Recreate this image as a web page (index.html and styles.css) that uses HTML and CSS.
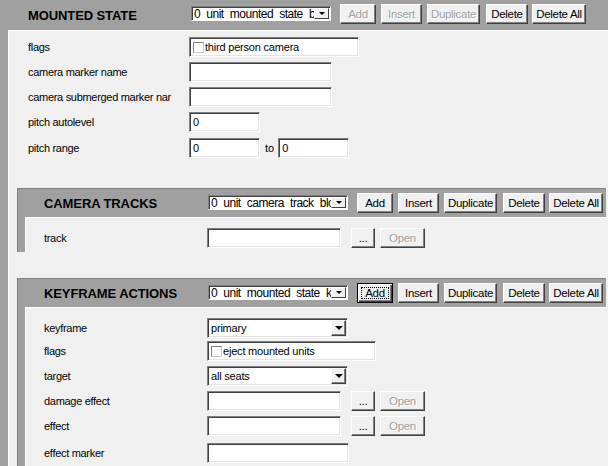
FILE: index.html
```html
<!DOCTYPE html>
<html>
<head>
<meta charset="utf-8">
<link rel="stylesheet" href="styles.css">
</head>
<body>
<div class="sec top">
  <div class="head">
    <div class="title">MOUNTED STATE</div>
    <div class="combo"><span class="combo-txt">0_unit_mounted_state_block</span><span class="combo-btn"><i class="tri-s"></i></span></div>
    <div class="btn dis b-add">Add</div>
    <div class="btn dis b-ins">Insert</div>
    <div class="btn dis b-dup">Duplicate</div>
    <div class="btn b-del">Delete</div>
    <div class="btn b-dall">Delete All</div>
  </div>
  <div class="body">
    <div class="row"><span class="lbl">flags</span><div class="inp w170"><span class="cb"></span>third person camera</div></div>
    <div class="row"><span class="lbl">camera marker name</span><div class="inp w143"></div></div>
    <div class="row"><span class="lbl">camera submerged marker nar</span><div class="inp w143"></div></div>
    <div class="row"><span class="lbl">pitch autolevel</span><div class="inp w71">0</div></div>
    <div class="row r6"><span class="lbl">pitch range</span><div class="inp w71">0</div><span class="to">to</span><div class="inp w71">0</div></div>

    <div class="sec nested cam">
      <div class="head">
        <div class="title">CAMERA TRACKS</div>
        <div class="combo"><span class="combo-txt">0_unit_camera_track_block</span><span class="combo-btn"><i class="tri-s"></i></span></div>
        <div class="btn b-add">Add</div>
        <div class="btn b-ins">Insert</div>
        <div class="btn b-dup">Duplicate</div>
        <div class="btn b-del">Delete</div>
        <div class="btn b-dall">Delete All</div>
      </div>
      <div class="body">
        <div class="row"><span class="lbl">track</span><div class="inp w134"></div><div class="btn b-dots">...</div><div class="btn dis b-open">Open</div></div>
      </div>
    </div>

    <div class="sec nested kf">
      <div class="head">
        <div class="title">KEYFRAME ACTIONS</div>
        <div class="combo"><span class="combo-txt">0_unit_mounted_state_keyframe_action_block</span><span class="combo-btn"><i class="tri-s"></i></span></div>
        <div class="btn def b-add"><span class="fr">Add</span></div>
        <div class="btn b-ins">Insert</div>
        <div class="btn b-dup">Duplicate</div>
        <div class="btn b-del">Delete</div>
        <div class="btn b-dall">Delete All</div>
      </div>
      <div class="body">
        <div class="row"><span class="lbl">keyframe</span><div class="inp sel w141"><span class="sel-txt">primary</span><span class="sel-btn"><i class="tri"></i></span></div></div>
        <div class="row r3"><span class="lbl">flags</span><div class="inp w169"><span class="cb"></span>eject mounted units</div></div>
        <div class="row"><span class="lbl">target</span><div class="inp sel w141"><span class="sel-txt">all seats</span><span class="sel-btn"><i class="tri"></i></span></div></div>
        <div class="row"><span class="lbl">damage effect</span><div class="inp w133"></div><div class="btn b-dots">...</div><div class="btn dis b-open">Open</div></div>
        <div class="row"><span class="lbl">effect</span><div class="inp w133"></div><div class="btn b-dots">...</div><div class="btn dis b-open">Open</div></div>
        <div class="row r7"><span class="lbl">effect marker</span><div class="inp w142"></div></div>
      </div>
    </div>
  </div>
</div>
</body>
</html>
```

FILE: styles.css
```css
* { box-sizing: border-box; }
html, body { margin: 0; padding: 0; height: 100%; overflow: hidden; }
body {
  background: #f0f0f0;
  font-family: "Liberation Sans", Arial, sans-serif;
  font-size: 11px;
  color: #000;
}

.sec { background: #a0a0a0; }
.top { width: 100%; min-height: 100vh; display: flex; flex-direction: column; }
.top > .body { flex: 1; padding-top: 6px; }

.head { display: flex; align-items: flex-start; height: 30px; padding-left: 28px; }
.nested > .head { height: 28px; padding-left: 26px; }

.title {
  width: 163px;
  flex: none;
  align-self: center;
  font-weight: bold;
  font-size: 13px;
  letter-spacing: -0.1px;
  white-space: nowrap;
}
.nested .title { width: 164px; }

.combo {
  margin-top: 6px;
  width: 140px;
  height: 15px;
  flex: none;
  display: flex;
  background: #fff;
  border: 1px solid;
  border-color: #808080 #fff #fff #808080;
  box-shadow: inset 1px 1px #404040;
  padding: 1px 1px 1px 2px;
}
.combo-txt {
  flex: 1;
  overflow: hidden;
  white-space: nowrap;
  font-size: 12px;
  line-height: 13px;
  height: 11px;
  letter-spacing: -0.5px;
  word-spacing: 1px;
}
.combo-btn {
  width: 15px;
  height: 11px;
  flex: none;
  background: #f0f0f0;
  border: 1px solid;
  border-color: #fff #404040 #404040 #fff;
  display: flex;
  align-items: center;
  justify-content: center;
}
.tri-s {
  display: block;
  width: 0; height: 0;
  border-left: 3px solid transparent;
  border-right: 3px solid transparent;
  border-top: 3px solid #000;
}
.tri {
  display: block;
  width: 0; height: 0;
  border-left: 4px solid transparent;
  border-right: 4px solid transparent;
  border-top: 4px solid #000;
}

.btn {
  flex: none;
  margin-top: 4px;
  height: 20px;
  background: #f0f0f0;
  border: 1px solid;
  border-color: #fff #404040 #404040 #fff;
  box-shadow: inset -1px -1px #808080;
  display: flex;
  align-items: center;
  justify-content: center;
  font-size: 11.5px;
  letter-spacing: -0.3px;
  white-space: nowrap;
}
.dis { color: #a0a0a0; text-shadow: 1px 1px #fff; }
.def {
  border-color: #000;
  box-shadow: inset 1px 1px #fff, inset -1px -1px #404040, inset -2px -2px #808080;
  align-items: stretch;
  padding: 3px 3px;
}
.fr {
  flex: 1;
  border: 1px dotted #000;
  display: flex;
  align-items: center;
  justify-content: center;
}

.b-add { width: 36px; margin-left: 9px; }
.b-ins { width: 41px; margin-left: 5px; }
.b-dup { width: 53px; margin-left: 5px; }
.b-del { width: 42px; margin-left: 6px; }
.b-dall { width: 54px; margin-left: 4px; }
.row .btn { margin-top: 0; }
.b-dots { width: 24px; margin-left: 10px; }
.b-open { width: 45px; margin-left: 5px; }

.body {
  margin-left: 8px;
  background: #f0f0f0;
  border-top: 1px solid #fff;
  border-left: 1px solid #fff;
}

.nested {
  margin-left: 8px;
  width: 589px;
  border-top: 1px solid #808080;
  border-left: 1px solid #808080;
}
.nested > .body { margin-left: 7px; padding-top: 10px; }
.cam { margin-top: 30px; }
.cam > .body { padding-bottom: 4px; }
.kf { margin-top: 26px; }
.kf > .body { padding-bottom: 20px; }

.row {
  display: flex;
  align-items: center;
  height: 20px;
  margin-top: 5px;
  padding-left: 19px;
}
.row:first-child { margin-top: 0; }
.r3 { margin-top: 3px; }
.row.r6 { margin-top: 6px; }
.row.r7 { margin-top: 7px; }
.nested .row { padding-left: 18px; }

.lbl {
  width: 161px;
  flex: none;
  letter-spacing: -0.3px;
  white-space: nowrap;
  overflow: hidden;
}
.nested .lbl { width: 163px; }

.inp {
  flex: none;
  height: 20px;
  background: #fff;
  border: 1px solid;
  border-color: #808080 #fff #fff #808080;
  box-shadow: inset 1px 1px #404040, inset -1px -1px #e3e3e3;
  padding-left: 3px;
  display: flex;
  align-items: center;
  white-space: nowrap;
  letter-spacing: -0.2px;
}
.w71 { width: 71px; }
.w133 { width: 134px; }
.w134 { width: 134px; }
.w141 { width: 141px; }
.w142 { width: 142px; }
.w143 { width: 143px; }
.w169 { width: 169px; }
.w170 { width: 170px; }

.to { margin: 0 4px 0 5px; }

.cb {
  width: 11px;
  height: 11px;
  flex: none;
  background: #fff;
  border: 1px solid;
  border-color: #808080 #c8c8c8 #c8c8c8 #808080;
  margin-right: 1px;
}

.sel { padding-right: 0; }
.sel-txt { flex: 1; overflow: hidden; }
.sel-btn {
  width: 15px;
  height: 16px;
  margin-right: 1px;
  flex: none;
  background: #f0f0f0;
  border: 1px solid;
  border-color: #fff #404040 #404040 #fff;
  box-shadow: inset -1px -1px #808080;
  display: flex;
  align-items: center;
  justify-content: center;
}
```
